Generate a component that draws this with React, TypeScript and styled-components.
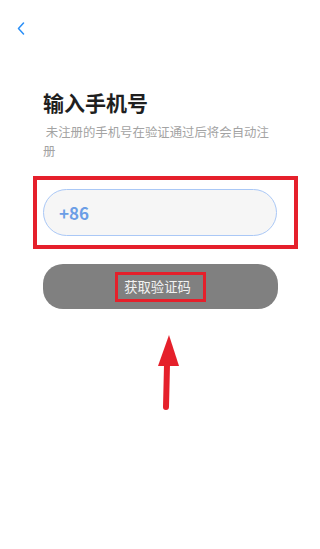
import React from 'react';
import styled, { createGlobalStyle } from 'styled-components';

const GlobalStyle = createGlobalStyle`
  html, body {
    margin: 0;
    padding: 0;
    background: #fff;
  }
  * {
    box-sizing: border-box;
  }
`;

const Page = styled.div`
  width: 320px;
  height: 549px;
  background: #fff;
  font-family: "Noto Sans CJK SC", "Noto Sans", sans-serif;
  display: flex;
  flex-direction: column;
  overflow: hidden;
`;

const Header = styled.div`
  height: 56px;
  display: flex;
  align-items: center;
  padding-left: 16px;
`;

const BackBtn = styled.button`
  border: none;
  background: none;
  padding: 0;
  width: 10px;
  height: 14px;
  display: flex;
  align-items: center;
  justify-content: center;
  cursor: pointer;
`;

const Content = styled.div`
  padding: 0 43px;
  display: flex;
  flex-direction: column;
`;

const Title = styled.h1`
  margin: 32px 0 0;
  font-size: 21px;
  line-height: 29px;
  font-weight: 700;
  color: #1f1f1f;
`;

const Subtitle = styled.p`
  margin: 6px 0 0;
  font-size: 12.4px;
  line-height: 19px;
  color: #a3a3a3;
  white-space: pre-wrap;
`;

const InputArea = styled.div`
  position: relative;
  margin-top: 28px;
`;

const Annotation = styled.div<{ $thick: number }>`
  position: absolute;
  border: ${p => p.$thick}px solid #e5202b;
  pointer-events: none;
`;

const PhoneInput = styled.input`
  width: 100%;
  height: 47px;
  border: 1px solid #aac8f6;
  border-radius: 24px;
  background: #f6f6f6;
  padding: 0 15px;
  font-family: "Noto Sans CJK SC", "Noto Sans", sans-serif;
  font-size: 17px;
  font-weight: 600;
  color: #6c9ee6;
  outline: none;

  &::placeholder {
    color: #6c9ee6;
  }
`;

const CodeButton = styled.button`
  margin-top: 28px;
  width: 235px;
  height: 45px;
  border: none;
  border-radius: 20px;
  background: #808080;
  display: flex;
  align-items: center;
  justify-content: center;
  cursor: pointer;
  padding: 0;
`;

const ButtonLabel = styled.span`
  border: 3px solid #e5202b;
  padding: 2px 12px 2px 6px;
  font-family: "Noto Sans CJK SC", sans-serif;
  font-size: 13.3px;
  line-height: 20px;
  color: #f2f2f2;
`;

const ArrowWrap = styled.div`
  margin-top: 26px;
  display: flex;
  justify-content: center;
  padding-left: 16px;
`;

function App() {
  return (
    <>
      <GlobalStyle />
      <Page>
        <Header>
          <BackBtn aria-label="返回">
            <svg width="8" height="13" viewBox="0 0 8 13">
              <polyline
                points="6.5,1 1.5,6.5 6.5,12"
                fill="none"
                stroke="#2a8ff7"
                strokeWidth="1.5"
                strokeLinecap="round"
                strokeLinejoin="round"
              />
            </svg>
          </BackBtn>
        </Header>
        <Content>
          <Title>输入手机号</Title>
          <Subtitle> 未注册的手机号在验证通过后将会自动注册</Subtitle>
          <InputArea>
            <PhoneInput placeholder="+86" />
            <Annotation $thick={4} style={{ left: -10, right: -21, top: -13, bottom: -13 }} />
          </InputArea>
          <CodeButton>
            <ButtonLabel>获取验证码</ButtonLabel>
          </CodeButton>
          <ArrowWrap>
            <svg width="26" height="76" viewBox="0 0 26 76">
              <polygon points="14,0 24,31 3,31" fill="#e5202b" />
              <line x1="12" y1="30" x2="11" y2="72" stroke="#e5202b" strokeWidth="6" strokeLinecap="round" />
            </svg>
          </ArrowWrap>
        </Content>
      </Page>
    </>
  );
}

export default App;
